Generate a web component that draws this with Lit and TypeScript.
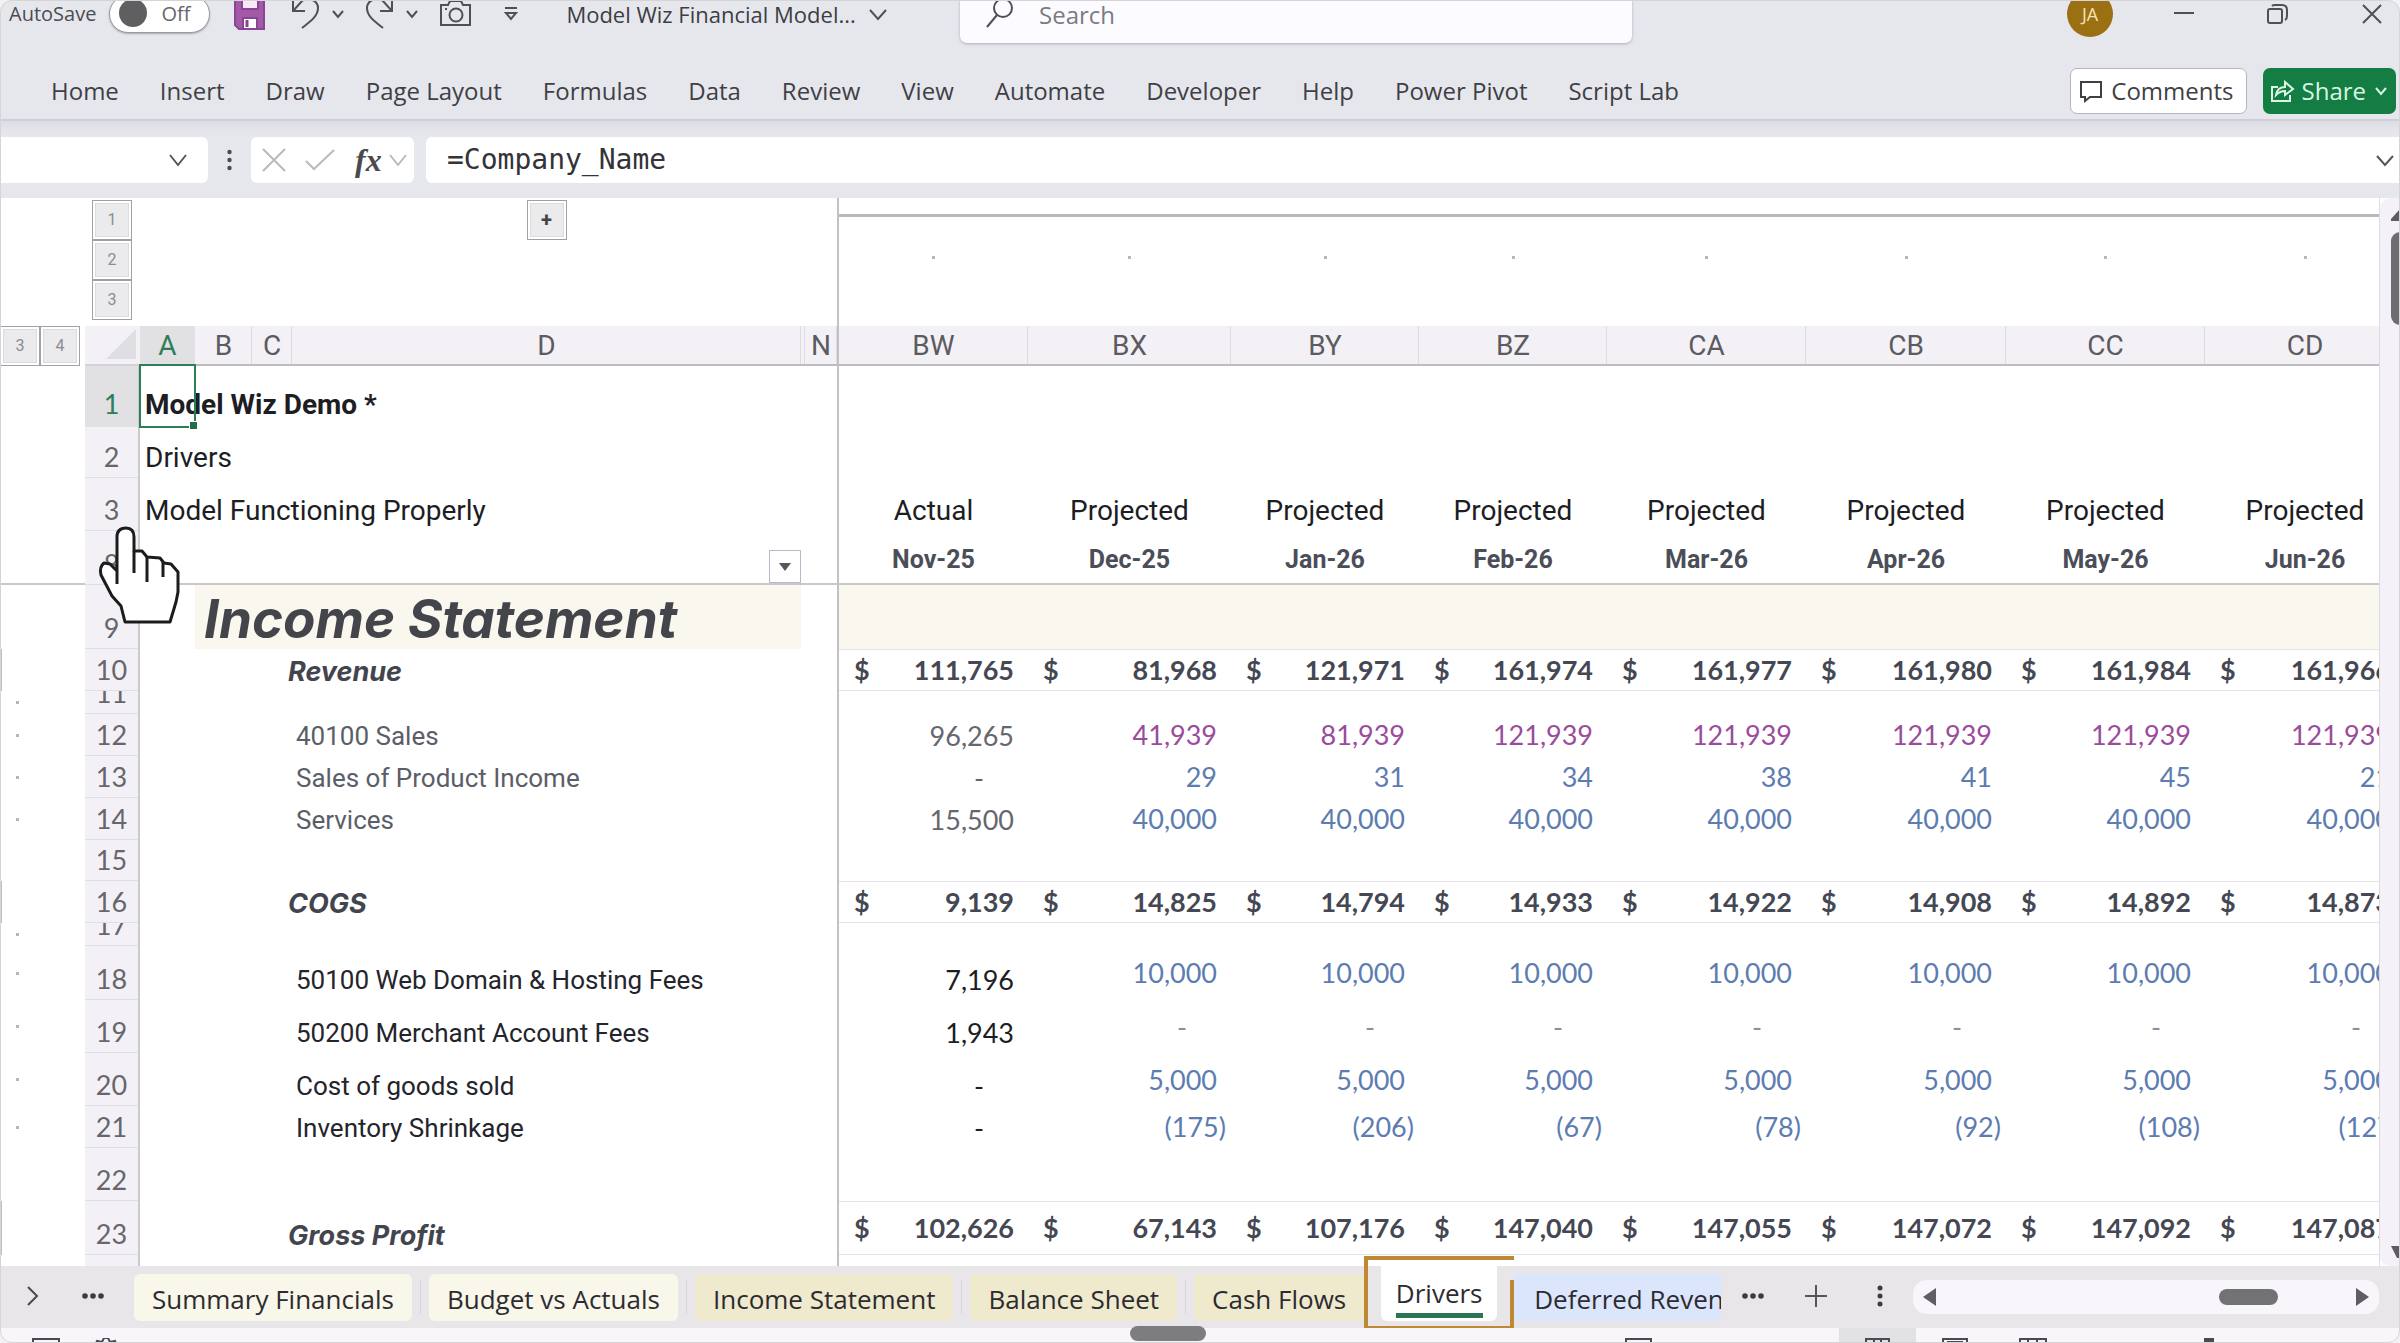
import { LitElement, html, css, svg, nothing, TemplateResult } from "lit";
import { customElement } from "lit/decorators.js";
import { classMap } from "lit/directives/class-map.js";

type Tone = "plain" | "muted" | "total";
interface SheetRow {
  n: number;
  h: number;
  kind: "blank" | "title" | "heading" | "line" | "section" | "states" | "dates";
  label?: string;
  tone?: Tone;
  color?: "purple" | "blue";
  mark?: boolean;
  edge?: boolean;
  values?: string[];
}

const COLUMNS = [
  { id: "A", w: 55 },
  { id: "B", w: 57 },
  { id: "C", w: 40 },
  { id: "D", w: 509 },
  { id: "", w: 4 },
  { id: "N", w: 34 },
];
const PERIODS = [
  { id: "BW", w: 189 },
  { id: "BX", w: 203 },
  { id: "BY", w: 188 },
  { id: "BZ", w: 188 },
  { id: "CA", w: 199 },
  { id: "CB", w: 200 },
  { id: "CC", w: 199 },
  { id: "CD", w: 200 },
];

const same = (first: string, rest: string) => [first, ...Array(7).fill(rest)];

const ROWS: SheetRow[] = [
  { n: 1, h: 61, kind: "title", label: "Model Wiz Demo *" },
  { n: 2, h: 51, kind: "title", label: "Drivers" },
  { n: 3, h: 53, kind: "states", label: "Model Functioning Properly", values: same("Actual", "Projected") },
  { n: 8, h: 54, kind: "dates", values: ["Nov-25", "Dec-25", "Jan-26", "Feb-26", "Mar-26", "Apr-26", "May-26", "Jun-26"] },
  { n: 9, h: 64, kind: "section", label: "Income Statement" },
  { n: 10, h: 42, kind: "heading", label: "Revenue", edge: true, values: ["111,765", "81,968", "121,971", "161,974", "161,977", "161,980", "161,984", "161,966"] },
  { n: 11, h: 23, kind: "blank", mark: true },
  { n: 12, h: 42, kind: "line", label: "40100 Sales", tone: "muted", color: "purple", mark: true, values: ["96,265", "41,939", "81,939", "121,939", "121,939", "121,939", "121,939", "121,939"] },
  { n: 13, h: 42, kind: "line", label: "Sales of Product Income", tone: "muted", color: "blue", mark: true, values: ["-", "29", "31", "34", "38", "41", "45", "21"] },
  { n: 14, h: 42, kind: "line", label: "Services", tone: "muted", color: "blue", mark: true, values: same("15,500", "40,000") },
  { n: 15, h: 41, kind: "blank" },
  { n: 16, h: 42, kind: "heading", label: "COGS", edge: true, values: ["9,139", "14,825", "14,794", "14,933", "14,922", "14,908", "14,892", "14,873"] },
  { n: 17, h: 23, kind: "blank", mark: true },
  { n: 18, h: 54, kind: "line", label: "50100 Web Domain & Hosting Fees", tone: "plain", color: "blue", mark: true, values: same("7,196", "10,000") },
  { n: 19, h: 53, kind: "line", label: "50200 Merchant Account Fees", tone: "plain", color: "blue", mark: true, values: same("1,943", "-") },
  { n: 20, h: 53, kind: "line", label: "Cost of goods sold", tone: "plain", color: "blue", mark: true, values: same("-", "5,000") },
  { n: 21, h: 42, kind: "line", label: "Inventory Shrinkage", tone: "plain", color: "blue", mark: true, values: ["-", "(175)", "(206)", "(67)", "(78)", "(92)", "(108)", "(127)"] },
  { n: 22, h: 53, kind: "blank" },
  { n: 23, h: 54, kind: "heading", label: "Gross Profit", edge: true, values: ["102,626", "67,143", "107,176", "147,040", "147,055", "147,072", "147,092", "147,087"] },
  { n: 24, h: 42, kind: "blank" },
];

const icon = (w: number, h: number, body: TemplateResult | unknown, cls = "") =>
  html`<svg class="icon ${cls}" width=${w} height=${h} viewBox="0 0 ${w} ${h}" aria-hidden="true">${body}</svg>`;

const chevron = (w = 20, h = 12, sw = 2) =>
  icon(w, h, svg`<path d="M2 2 L${w / 2} ${h - 2} L${w - 2} 2" stroke-width=${sw} />`);

const RIBBON = ["Home", "Insert", "Draw", "Page Layout", "Formulas", "Data", "Review", "View", "Automate", "Developer", "Help", "Power Pivot", "Script Lab"];

@customElement("xl-title-bar")
class XlTitleBar extends LitElement {
  static styles = css`
    :host { display: grid; grid-template-columns: 40% 28% 1fr; height: 28px; color: #4c4c52; font: 20px/28px "Open Sans", sans-serif; }
    .left, .right { display: flex; align-items: center; height: 28px; }
    .left { padding-left: 9px; }
    button { all: unset; display: flex; align-items: center; cursor: pointer; }
    .icon { display: block; fill: none; stroke: #4f4f55; stroke-width: 2; overflow: visible; }
    .auto { display: flex; align-items: center; gap: 13px; }
    .track { position: relative; display: flex; align-items: center; width: 101px; height: 38px; box-sizing: border-box; padding-left: 51px; border: 1px solid #9a9aa0; border-radius: 19px; background: #fff; box-shadow: 0 1px 2px #a9a9b0; color: #66666c; }
    .track::before { content: ""; position: absolute; left: 9px; top: 3px; width: 28px; height: 28px; border-radius: 50%; background: #5f5f62; }
    .track input { position: absolute; inset: 0; margin: 0; opacity: 0; }
    .save { margin-left: 24px; }
    .undo { margin-left: 26px; gap: 12px; }
    .redo { margin-left: 21px; gap: 11px; }
    .camera { margin-left: 20px; }
    .more { margin-left: 32px; }
    .doc { margin-left: 48px; gap: 12px; font-size: 22px; color: #3d3d43; white-space: nowrap; }
    .search { position: relative; display: flex; gap: 25px; height: 43px; padding-left: 26px; border-radius: 0 0 7px 7px; background: #fcfbff; box-shadow: 0 1px 3px #aeaeb8; }
    .search input { all: unset; flex: 1; height: 30px; font-size: 24px; line-height: 30px; color: #333; }
    .search input::placeholder { color: #7b7b82; opacity: 1; }
    .right { justify-content: flex-end; padding-right: 18px; }
    .avatar { justify-content: center; width: 46px; height: 46px; border-radius: 50%; background: #9a7012; color: #f3e2b8; font-size: 18px; }
    .min { margin-left: 61px; }
    .restore { margin-left: 73px; }
    .close { margin-left: 74px; }
  `;
  render() {
    return html`
      <div class="left">
        <label class="auto">AutoSave<span class="track"><input type="checkbox" role="switch" />Off</span></label>
        <button class="save" aria-label="Save">${icon(31, 32, svg`<path d="M1 -3 H30 V31 H5 L1 27 Z" fill="#a25aa8" stroke="#8a4493"/><rect x="8" y="-3" width="16" height="14" fill="#f7e9fa" stroke="#8a4493"/><rect x="9" y="20" width="14" height="11" fill="#fff" stroke="#8a4493"/><path d="M13 22 V29" stroke="#8a4493" stroke-width="3"/>`)}</button>
        <button class="undo" aria-label="Undo">${icon(28, 28, svg`<path d="M2 -4 V11 H14 M2 11 L11 1 C18 -4 27 1 27 8 C27 16 20 21 11 28"/>`)}${chevron(14, 10, 2)}</button>
        <button class="redo" aria-label="Redo">${icon(28, 28, svg`<path d="M26 -4 V11 H14 M26 11 L17 1 C10 -4 1 1 1 8 C1 16 8 21 17 28"/>`)}${chevron(14, 10, 2)}</button>
        <button class="camera" aria-label="Camera">${icon(33, 24, svg`<path d="M2 3 H9 L11 -1 H22 L24 3 H31 V23 H2 Z"/><circle cx="17" cy="13" r="6.5"/><path d="M6 7 H8"/>`)}</button>
        <button class="more" aria-label="Customize toolbar">${icon(14, 14, svg`<path d="M1 1 H13 M2 6 L7 12 L12 6 Z" />`)}</button>
        <button class="doc">Model Wiz Financial Model...${chevron(20, 13)}</button>
      </div>
      <label class="search">${icon(28, 28, svg`<circle cx="17" cy="8" r="9"/><path d="M11 15 L1 27"/>`)}<input type="search" placeholder="Search" aria-label="Search" /></label>
      <div class="right">
        <button class="avatar" aria-label="Account">JA</button>
        <button class="min" aria-label="Minimize">${icon(20, 20, svg`<path d="M0 9 H20"/>`)}</button>
        <button class="restore" aria-label="Restore">${icon(21, 20, svg`<rect x="1" y="5" width="14" height="14" rx="2"/><path d="M5 2 Q6 1 8 1 H15 Q20 1 20 6 V12 Q20 15 18 16"/>`)}</button>
        <button class="close" aria-label="Close">${icon(20, 20, svg`<path d="M1 1 L19 19 M19 1 L1 19"/>`)}</button>
      </div>`;
  }
}

@customElement("xl-ribbon")
class XlRibbon extends LitElement {
  static styles = css`
    :host { display: flex; align-items: center; justify-content: space-between; height: 56px; margin-top: 35px; padding: 0 4px 0 51px; border-bottom: 2px solid #cdced6; font: 24px/34px "Open Sans", sans-serif; color: #3f3f45; }
    nav { display: flex; gap: 41px; }
    button { all: unset; box-sizing: border-box; cursor: pointer; white-space: nowrap; }
    .actions { display: flex; gap: 16px; }
    .actions button { display: flex; align-items: center; height: 46px; border-radius: 7px; }
    .comments { gap: 9px; padding: 0 12px 0 9px; background: #fff; border: 1px solid #b5b5bd; }
    .share { gap: 8px; padding: 0 8px; background: #137d43; color: #d9f6e4; }
    .icon { display: block; fill: none; stroke: currentColor; stroke-width: 2; overflow: visible; }
  `;
  render() {
    return html`
      <nav aria-label="Ribbon">${RIBBON.map((t) => html`<button>${t}</button>`)}</nav>
      <div class="actions">
        <button class="comments">${icon(22, 22, svg`<path d="M1 2 H21 V17 H10 L5 21 V17 H1 Z"/>`)}Comments</button>
        <button class="share">${icon(23, 22, svg`<path d="M7 7 H1 V21 H19 V15"/><path d="M5 15 C6 9 10 7 14 7 V2 L22 9 L14 15 V11 C10 11 8 12 5 15 Z"/>`)}Share${chevron(14, 10, 2)}</button>
      </div>`;
  }
}

@customElement("xl-formula-bar")
class XlFormulaBar extends LitElement {
  static styles = css`
    :host { display: flex; padding: 16px 0 15px; background: linear-gradient(#dcdde5, #e6e7ed 12px); }
    .name, .tools, .formula { display: flex; align-items: center; height: 46px; background: #fff; box-sizing: border-box; }
    .name { width: 208px; padding-right: 20px; border-radius: 0 6px 6px 0; }
    input { all: unset; flex: 1; min-width: 0; height: 46px; }
    button { all: unset; display: flex; align-items: center; cursor: pointer; }
    .grip { width: 43px; display: flex; align-items: center; justify-content: center; }
    .tools { width: 163px; padding-left: 11px; border-radius: 6px; margin-right: 12px; }
    .check { margin-left: 18px; }
    .fx { margin-left: 19px; font: italic 700 32px/40px "Liberation Serif", serif; color: #4a4a4e; }
    .fxmore { margin-left: 7px; }
    .formula { flex: 1; padding: 0 5px 0 21px; border-radius: 6px 0 0 6px; font: 28px/46px "DejaVu Sans Mono", monospace; color: #333338; }
    .icon { display: block; fill: none; stroke: #55555b; stroke-width: 2; }
    .icon.dim { stroke: #b9b9bf; }
    .icon.dot { fill: #4a4a50; stroke: none; }
  `;
  render() {
    return html`
      <div class="name"><input aria-label="Name box" /><button aria-label="Open names">${chevron(20, 14)}</button></div>
      <div class="grip">${icon(5, 22, svg`<circle cx="2.5" cy="3" r="2.2"/><circle cx="2.5" cy="11" r="2.2"/><circle cx="2.5" cy="19" r="2.2"/>`, "dot")}</div>
      <div class="tools">
        <button aria-label="Cancel">${icon(24, 24, svg`<path d="M1 1 L23 23 M23 1 L1 23"/>`, "dim")}</button>
        <button class="check" aria-label="Enter">${icon(32, 24, svg`<path d="M2 13 L10 21 L30 2"/>`, "dim")}</button>
        <button class="fx" aria-label="Insert function">fx</button>
        <button class="fxmore" aria-label="Functions">${icon(18, 13, svg`<path d="M1 1 L9 11 L17 1"/>`, "dim")}</button>
      </div>
      <div class="formula"><input aria-label="Formula" .value=${"=Company_Name"} /><button aria-label="Expand formula bar">${chevron(20, 13)}</button></div>`;
  }
}

@customElement("xl-grid")
class XlGrid extends LitElement {
  static styles = css`
    :host { display: flex; flex: 1; min-height: 0; overflow: hidden; background: #fff; font: 28px/34px Roboto, sans-serif; color: #1d1d24; }
    .view { flex: 1; min-width: 0; overflow: hidden; border-right: 1px solid #dcdbe2; }
    table { table-layout: fixed; border-collapse: separate; border-spacing: 0; width: 2405px; }
    th, td { padding: 0; font-weight: 400; text-align: left; vertical-align: bottom; box-sizing: border-box; white-space: nowrap; }
    button { all: unset; box-sizing: border-box; cursor: pointer; display: flex; align-items: center; justify-content: center; }
    .freeze { border-right: 2px solid #c2c2c6; }
    .rule { height: 19px; border-bottom: 3px solid #b9b9bc; }
    .mid { height: 109px; vertical-align: top; text-align: center; }
    .tick { display: block; width: 3px; height: 3px; margin: 39px auto 0; background: #b7b7bc; }
    .level { width: 40px; height: 40px; border: 1px solid #9fa0a8; box-shadow: inset 0 0 0 2px #fff, inset 0 0 0 3px #dcdce0; background: #ebeaec; color: #8c8c92; font-size: 16px; }
    .plus { color: #444; font-weight: 700; font-size: 20px; margin: 0 auto; }
    .top { vertical-align: top; }
    .levels { display: flex; flex-direction: column; align-items: flex-start; padding-top: 2px; }
    .levels.rows { padding-left: 92px; }
    .levels.across { flex-direction: row; padding: 0; }
    .heads th { height: 40px; padding-top: 2px; vertical-align: middle; text-align: center; background: linear-gradient(90deg, transparent calc(100% - 1px), #dddce1 0), #f3f1f5; border-bottom: 2px solid #bdbdc1; color: #5b5b61; }
    .heads .gutter { padding: 0; background: #fff; border-bottom: 0; }
    .heads .picked { background: #e1e0e3; color: #2f7d56; border-bottom-color: #2f7d56; }
    .heads .corner { padding: 0; border-bottom-color: #d3d2d7; vertical-align: bottom; background: #f3f1f5; }
    .corner svg { display: block; margin: 0 4px 5px auto; }
    .num { border-right: 2px solid #cbcace; background: #f3f1f5; }
    .num div { display: flex; align-items: flex-end; justify-content: center; overflow: hidden; box-sizing: border-box; padding-bottom: 3px; border-bottom: 1px solid #e0dfe4; color: #66666c; font: 27px/34px Lato, sans-serif; }
    .num.picked div { background: #e1e0e3; color: #2f7d56; padding-bottom: 5px; }
    .side { vertical-align: middle; }
    .side i { display: block; width: 3px; height: 3px; margin-left: 16px; background: #b5b5ba; }
    .side.edge { border-left: 2px solid #bdbdc2; }
    .text { padding: 0 0 3px 5px; }
    .first { position: relative; padding-bottom: 5px; font-weight: 700; }
    .select { position: absolute; left: -1px; top: -2px; width: 57px; height: 64px; box-sizing: border-box; border: 2px solid #2f7d56; }
    .select::after { content: ""; position: absolute; right: -4px; bottom: -4px; width: 7px; height: 7px; background: #1f6f47; border: 1px solid #fff; }
    .state { text-align: center; padding-bottom: 3px; }
    .date { text-align: center; vertical-align: middle; padding-top: 6px; font: 700 25px/34px Roboto, sans-serif; color: #4b4e58; }
    .under > td { border-bottom: 2px solid #c9c9cc; }
    .filter { width: 32px; height: 33px; margin-left: auto; border: 1px solid #b9b9cc; background: #fff; }
    .band { background: #faf7ee; }
    .section { padding: 0 0 2px 9px; font: italic 700 53px/56px Inter, sans-serif; color: #43454b; }
    .heading { padding: 0 0 2px 36px; font: italic 700 27px/34px Inter, sans-serif; color: #43454e; }
    .label { padding: 0 0 3px 4px; font-size: 26px; color: #24242c; }
    .label.muted { color: #5b5e69; }
    .total { border-top: 1px solid #e6e4e9; border-bottom: 1px solid #e6e4e9; font-weight: 700; color: #454853; vertical-align: middle; }
    .money { display: flex; justify-content: space-between; padding: 0 14px 0 15px; }
    .total, .value { font-family: Lato, sans-serif; font-size: 27px; }
    .value { padding: 0 14px 3px 0; text-align: right; }
    .value.muted { color: #65676f; }
    .value.calc { vertical-align: middle; padding-bottom: 0; }
    .value.purple { color: #9a4b9b; }
    .value.blue { color: #5d7cb0; }
    .value.neg { padding-right: 5px; }
    .value.dash { padding-right: 44px; }
    .value.calc.dash { color: #8b8fa0; }
    .vbar { position: relative; width: 20px; overflow: hidden; background: #f4f2f8; display: flex; flex-direction: column; align-items: flex-end; padding: 11px 0 8px; box-sizing: border-box; border-radius: 10px 0 0 10px; }
    .vbar .thumb { width: 9px; height: 93px; margin-top: 11px; border-radius: 9px 0 0 9px; background: #6d6d70; }
    .vbar .down { margin-top: auto; }
    .hand { position: absolute; left: 97px; top: 525px; }
  `;

  private cells(r: SheetRow) {
    const v = r.values ?? [];
    return PERIODS.map((_, i) => {
      if (r.kind === "section") return html`<td class="band"></td>`;
      if (!v.length) return html`<td></td>`;
      if (r.kind === "states") return html`<td class="state">${v[i]}</td>`;
      if (r.kind === "dates") return html`<td class="date">${v[i]}</td>`;
      if (r.kind === "heading") return html`<td class="total"><div class="money"><span>$</span><span>${v[i]}</span></div></td>`;
      const calc = i > 0;
      return html`<td class=${classMap({
        value: true,
        calc,
        muted: !calc && r.tone === "muted",
        purple: calc && r.color === "purple",
        blue: calc && r.color === "blue",
        neg: v[i].startsWith("("),
        dash: v[i] === "-",
      })}>${v[i]}</td>`;
    });
  }

  private labels(r: SheetRow) {
    const n = html`<td class="freeze"></td>`;
    switch (r.kind) {
      case "title":
      case "states":
        return html`<td class="text ${r.n === 1 ? "first" : ""}" colspan="5">${r.label}${r.n === 1 ? html`<span class="select"></span>` : nothing}</td>${n}`;
      case "dates":
        return html`<td colspan="4"><button class="filter" aria-label="Filter"><svg width="12" height="8" viewBox="0 0 12 8"><path d="M0 0 H12 L6 8 Z" fill="#55555c" /></svg></button></td><td></td>${n}`;
      case "section":
        return html`<td></td><td class="band section" colspan="3">${r.label}</td><td></td>${n}`;
      case "heading":
        return html`<td></td><td></td><td class="heading" colspan="3">${r.label}</td>${n}`;
      case "line":
        return html`<td></td><td></td><td></td><td class="label ${r.tone ?? ""}" colspan="2">${r.label}</td>${n}`;
      default:
        return html`<td colspan="5"></td>${n}`;
    }
  }

  render() {
    return html`
      <div class="view">
        <table>
          <colgroup>
            <col style="width:85px" /><col style="width:55px" />
            ${[...COLUMNS, ...PERIODS].map((c) => html`<col style="width:${c.w}px" />`)}
          </colgroup>
          <thead>
            <tr>
              <td class="top" colspan="3" rowspan="2"><div class="levels rows">${[1, 2, 3].map((l) => html`<button class="level">${l}</button>`)}</div></td>
              <td colspan="2" rowspan="2"></td>
              <td class="top" rowspan="2"><div class="levels"><button class="level plus">+</button></div></td>
              <td rowspan="2"></td>
              <td class="freeze" rowspan="2"></td>
              <td class="rule" colspan="8"></td>
            </tr>
            <tr>${PERIODS.map(() => html`<td class="mid"><i class="tick"></i></td>`)}</tr>
            <tr class="heads">
              <th class="gutter"><div class="levels across"><button class="level">3</button><button class="level">4</button></div></th>
              <th class="corner"><svg width="30" height="30" viewBox="0 0 30 30"><path d="M30 0 V30 H0 Z" fill="#dedde1" /></svg></th>
              ${COLUMNS.map((c) => html`<th scope="col" class=${classMap({ picked: c.id === "A", freeze: c.id === "N" })}>${c.id}</th>`)}
              ${PERIODS.map((c) => html`<th scope="col">${c.id}</th>`)}
            </tr>
          </thead>
          <tbody>
            ${ROWS.map((r) => html`
              <tr class=${r.kind === "dates" ? "under" : ""} style="height:${r.h}px">
                <td class="side ${r.edge ? "edge" : ""}">${r.mark ? html`<i></i>` : nothing}</td>
                <th scope="row" class="num ${r.n === 1 ? "picked" : ""}"><div style="height:${r.h}px">${r.n}</div></th>
                ${this.labels(r)}${this.cells(r)}
              </tr>`)}
          </tbody>
        </table>
      </div>
      <div class="vbar">
        <svg width="9" height="12" viewBox="0 0 9 12"><path d="M9 0 L0 10 V12 H9 Z" fill="#5d5d61" /></svg>
        <div class="thumb"></div>
        <svg class="down" width="9" height="12" viewBox="0 0 9 12"><path d="M0 0 H9 V12 L6 12 Z" fill="#5d5d61" /></svg>
      </div>
      <svg class="hand" width="86" height="100" viewBox="97 525 86 100" aria-hidden="true">
        <path d="M117 584 V537 Q117 528 126 528 Q134 528 134 537 V551 L142 551 L147 557 L160 558 L164 563 L171 564 L178 572 V592 L176 602 L170 622 H125 L121 606 L112 596 L101 575 Q99 567 104 563 L110 564 L117 571" fill="#fff" stroke="#1c1c1e" stroke-width="3" stroke-linejoin="round" />
        <path d="M134 551 V573 M147 557 V582 M163 562 V577" fill="none" stroke="#1c1c1e" stroke-width="3" />
      </svg>`;
  }
}

@customElement("xl-sheet-tabs")
class XlSheetTabs extends LitElement {
  static styles = css`
    :host { position: relative; display: flex; height: 62px; background: #e9e6e9; font: 26px/34px "Open Sans", sans-serif; color: #2c2c30; }
    button { all: unset; box-sizing: border-box; display: flex; align-items: center; justify-content: center; cursor: pointer; white-space: nowrap; }
    .nav { width: 22px; height: 60px; }
    .next { margin-left: 22px; }
    .dots { margin-left: 38px; margin-right: 30px; width: 22px; }
    .tabs { display: flex; gap: 17px; padding-top: 8px; }
    .tab { position: relative; height: 47px; padding: 3px 18px 0; border-radius: 6px; }
    .tab + .tab::before { content: ""; position: absolute; left: -9px; top: 6px; height: 34px; border-left: 1px solid #d9d4dc; }
    .cream { background: #f9f6ea; }
    .khaki { background: #efe9ce; }
    .holder { position: relative; width: 150px; height: 62px; display: flex; justify-content: center; }
    .holder::before { content: ""; position: absolute; left: 0; right: 0; top: -10px; height: 74px; box-sizing: border-box; border: 4px solid #bf8832; border-right: 0; }
    .holder::after { content: ""; position: absolute; right: 0; top: 14px; height: 50px; border-left: 4px solid #bf8832; }
    .active { height: 55px; width: 116px; background: #fff; border-radius: 0 0 6px 6px; font-weight: 500; }
    .active span { border-bottom: 5px solid #2c7553; margin-top: 4px; line-height: 40px; }
    .lid { position: absolute; left: 4px; right: 0; top: -6px; height: 6px; background: #fff; }
    .blue { width: 207px; height: 47px; margin-top: 8px; padding: 3px 0 0 20px; justify-content: flex-start; overflow: hidden; background: #dbe5fb; }
    .more { margin-left: 21px; }
    .add { margin-left: 41px; }
    .grip { margin-left: 42px; }
    .hbar { display: flex; align-items: center; flex: 1; height: 34px; margin: 14px 21px 0 22px; padding: 0 10px; border-radius: 14px; background: #f9f6fb; }
    .hbar .thumb { width: 59px; height: 16px; margin-left: auto; margin-right: 78px; border-radius: 8px; background: #727275; }
    svg { display: block; }
  `;
  render() {
    const dots = html`<svg width="22" height="6" viewBox="0 0 22 6"><g fill="#3c3c40"><circle cx="3" cy="3" r="2.8" /><circle cx="11" cy="3" r="2.8" /><circle cx="19" cy="3" r="2.8" /></g></svg>`;
    return html`
      <button class="nav next" aria-label="Next sheets"><svg width="12" height="20" viewBox="0 0 12 20"><path d="M1 1 L10 10 L1 19" fill="none" stroke="#4a4a4e" stroke-width="2" /></svg></button>
      <button class="nav dots" aria-label="All sheets">${dots}</button>
      <div class="tabs">
        <button class="tab cream">Summary Financials</button>
        <button class="tab cream">Budget vs Actuals</button>
        <button class="tab khaki">Income Statement</button>
        <button class="tab khaki">Balance Sheet</button>
        <button class="tab khaki">Cash Flows</button>
      </div>
      <div class="holder"><span class="lid"></span><button class="active"><span>Drivers</span></button></div>
      <button class="blue">Deferred Reven</button>
      <button class="nav more" aria-label="More sheets">${dots}</button>
      <button class="nav add" aria-label="New sheet"><svg width="22" height="22" viewBox="0 0 22 22"><path d="M11 0 V22 M0 11 H22" stroke="#55555a" stroke-width="2" /></svg></button>
      <button class="nav grip" aria-label="Resize tabs"><svg width="6" height="22" viewBox="0 0 6 22"><g fill="#3c3c40"><circle cx="3" cy="3" r="2.5" /><circle cx="3" cy="11" r="2.5" /><circle cx="3" cy="19" r="2.5" /></g></svg></button>
      <div class="hbar">
        <svg width="13" height="18" viewBox="0 0 13 18"><path d="M13 0 V18 L0 9 Z" fill="#5f5f63" /></svg>
        <div class="thumb"></div>
        <svg width="13" height="18" viewBox="0 0 13 18"><path d="M0 0 V18 L13 9 Z" fill="#5f5f63" /></svg>
      </div>`;
  }
}

@customElement("xl-status-bar")
class XlStatusBar extends LitElement {
  static styles = css`
    :host { position: relative; display: flex; align-items: flex-start; height: 15px; padding-left: 32px; background: #f8f6fb; }
    svg { display: block; fill: none; stroke: #4a4a50; stroke-width: 2; margin-top: 10px; }
    .gear { margin-left: 34px; }
    .views { display: flex; margin-left: auto; margin-right: 186px; }
    .screen { margin-right: 187px; }
    .normal { padding: 0 26px; height: 15px; background: #e2e1e5; }
    .layout { margin-left: 26px; }
    .breaks { margin-left: 51px; }
    .zoom { margin-left: 157px; }
    .thumb { position: absolute; left: 1130px; top: -2px; width: 76px; height: 15px; border-radius: 8px; background: #7d7d80; }
  `;
  render() {
    return html`
      <svg width="28" height="20" viewBox="0 0 28 20"><rect x="1" y="1" width="26" height="20" /></svg>
      <svg class="gear" width="24" height="20" viewBox="0 0 24 20"><path d="M1 8 L3 3 L8 4 L10 0 H14 L16 4 L21 3 L23 8" /></svg>
      <div class="views">
        <svg class="screen" width="27" height="20" viewBox="0 0 27 20"><rect x="1" y="1" width="25" height="20" /></svg>
        <div class="normal"><svg width="25" height="20" viewBox="0 0 25 20"><path d="M1 20 V1 H24 V20 M9 1 V20 M16 1 V20" /></svg></div>
        <svg class="layout" width="26" height="20" viewBox="0 0 26 20"><path d="M1 20 V1 H25 V20 M6 20 V4 H20 V20" /></svg>
        <svg class="breaks" width="28" height="20" viewBox="0 0 28 20"><path d="M1 20 V1 H27 V20 M9 1 V20 M18 1 V20" /></svg>
        <svg class="zoom" width="10" height="20" viewBox="0 0 10 20"><path d="M0 2 H10" stroke-width="4" /></svg>
      </div>
      <div class="thumb"></div>`;
  }
}

@customElement("app-root")
class AppRoot extends LitElement {
  static styles = css`
    :host { position: relative; display: flex; flex-direction: column; height: 100vh; overflow: hidden; background: #e6e7ed; }
    .frame { position: absolute; inset: 0; border: 1px solid #d6d5d6; border-radius: 12px; box-shadow: 0 0 0 12px #f3f2f3; pointer-events: none; }
  `;
  render() {
    return html`
      <xl-title-bar></xl-title-bar>
      <xl-ribbon></xl-ribbon>
      <xl-formula-bar></xl-formula-bar>
      <xl-grid></xl-grid>
      <xl-sheet-tabs></xl-sheet-tabs>
      <xl-status-bar></xl-status-bar>
      <div class="frame"></div>`;
  }
}
